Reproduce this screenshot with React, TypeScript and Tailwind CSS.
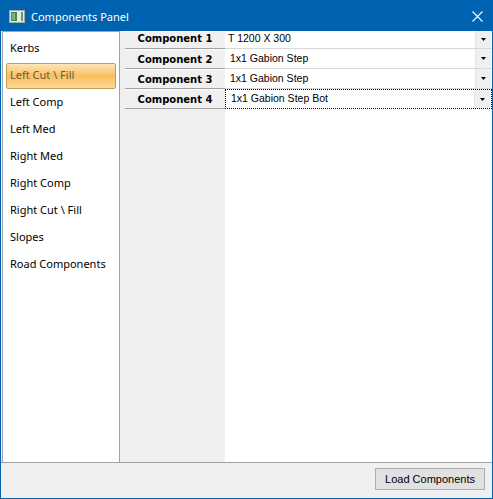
import React from 'react';

const items = [
  'Kerbs',
  'Left Cut \\ Fill',
  'Left Comp',
  'Left Med',
  'Right Med',
  'Right Comp',
  'Right Cut \\ Fill',
  'Slopes',
  'Road Components',
];

const rows = [
  { name: 'Component 1', value: 'T 1200 X 300' },
  { name: 'Component 2', value: '1x1 Gabion Step' },
  { name: 'Component 3', value: '1x1 Gabion Step' },
  { name: 'Component 4', value: '1x1 Gabion Step Bot' },
];

const WindowIcon = () => (
  <svg width="16" height="13" viewBox="0 0 16 13">
    <rect x="0.5" y="0.5" width="15" height="12" fill="#e8e8e8" stroke="#a8a8a8" />
    <rect x="2" y="2" width="6" height="9" fill="#3f8f55" />
    <rect x="3" y="3" width="3" height="7" fill="#6fb783" />
    <rect x="12" y="2" width="2" height="9" fill="#5aa06c" />
  </svg>
);

const CloseIcon = () => (
  <svg width="11" height="11" viewBox="0 0 11 11">
    <path d="M0.5 0.5 L10.5 10.5 M10.5 0.5 L0.5 10.5" stroke="#ffffff" strokeWidth="1.1" />
  </svg>
);

const Arrow = () => (
  <svg width="5" height="3" viewBox="0 0 5 3">
    <path d="M0 0 H5 L2.5 3 Z" fill="#000000" />
  </svg>
);

export default function App() {
  const selected = 1;

  return (
    <div
      className="w-[493px] h-[499px] flex flex-col border border-[#0063b1] bg-[#f0f0f0] overflow-hidden"
      style={{ fontFamily: '"Noto Sans", Roboto, sans-serif' }}
    >
      {/* Title bar */}
      <div className="h-[30px] bg-[#0063b1] flex items-center pl-[8px] pr-[9px] shrink-0">
        <div className="mt-[1px]">
          <WindowIcon />
        </div>
        <span className="ml-[6px] text-white text-[11px] leading-none">Components Panel</span>
        <div className="ml-auto mt-[1px]">
          <CloseIcon />
        </div>
      </div>

      {/* Body */}
      <div className="flex-1 flex pl-[1px] min-h-0">
        {/* Left list */}
        <div className="w-[118px] bg-white border border-[#a0a0a8] border-b-0 pt-[3px] px-[3px] shrink-0">
          {items.map((item, i) => (
            <div key={item} className="h-[27px] flex items-center">
              <div
                className={
                  i === selected
                    ? 'w-full h-[26px] flex items-center pl-[3px] rounded-[2px] border border-[#c49c5a] bg-gradient-to-b from-[#fde6b8] via-[#f9bf5c] to-[#fdd996] text-[#6a5a44] text-[11px]'
                    : 'w-full h-[26px] flex items-center pl-[4px] text-black text-[11px]'
                }
              >
                {item}
              </div>
            </div>
          ))}
        </div>

        {/* Grid */}
        <div className="flex-1 flex min-w-0">
          <div className="w-[105px] bg-[#f0f0f0] pl-[5px] shrink-0">
            {rows.map((row, i) => (
              <div
                key={row.name}
                className={`${i === 0 ? 'h-[18px] pb-[3px]' : 'h-[20px]'} flex items-center justify-center border-b border-[#a0a0a0] border-t border-t-white text-[10px] font-bold text-black`}
                style={{ fontFamily: '"DejaVu Sans", Verdana, sans-serif' }}
              >
                {row.name}
              </div>
            ))}
          </div>
          <div className="flex-1 bg-white min-w-0">
            {rows.map((row, i) => (
              <div
                key={row.name}
                className={`${i === 0 ? 'h-[18px]' : 'h-[20px]'} flex ${
                  i === 3 ? 'border border-dotted border-black' : 'border-b border-[#d8d8d8]'
                }`}
              >
                <div
                  className={`flex-1 flex ${i === 0 ? 'items-start pl-[3px]' : 'items-center pl-[5px]'} ${
                    i === 3 ? 'pl-[4px]' : ''
                  } text-[10.5px] text-black`}
                  style={{ fontFamily: '"Liberation Sans", Arial, sans-serif' }}
                >
                  {row.value}
                </div>
                <div className="w-[16px] bg-[#f0f0f0] border-l border-[#e4e4e4] flex items-center justify-center mr-[1px]">
                  <Arrow />
                </div>
              </div>
            ))}
          </div>
        </div>
      </div>

      {/* Bottom bar */}
      <div className="h-[36px] shrink-0 border-t border-[#a0a0a8] bg-[#f0f0f0] flex items-start justify-end pt-[5px] pr-[7px]">
        <button
          className="w-[110px] h-[22px] bg-[#e1e1e1] border border-[#adadad] text-[11px] text-black leading-none flex items-center justify-center"
          style={{ fontFamily: '"Liberation Sans", Arial, sans-serif' }}
        >
          Load Components
        </button>
      </div>
    </div>
  );
}
